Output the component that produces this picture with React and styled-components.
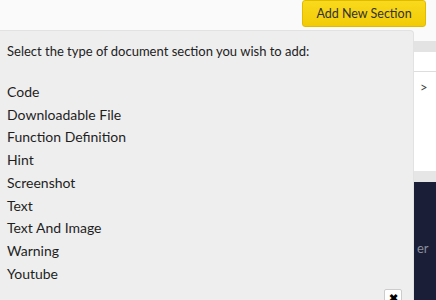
import React from 'react'
import styled, { createGlobalStyle } from 'styled-components'

const Global = createGlobalStyle`
body {
  margin: 0;
  background: #fafafa;
  font-family: Lato, "Open Sans", sans-serif;
  color: #222;
}
`

const Page = styled.div`
position: relative;
width: 436px;
height: 300px;
overflow: hidden;
`

const TopBar = styled.div`
height: 30px;
display: flex;
justify-content: flex-end;
padding-right: 10px;
`

const AddButton = styled.button`
height: 27px;
width: 124px;
background: linear-gradient(#f9d91c, #f2cb06);
border: 1px solid #e2bb00;
border-radius: 3px;
font-family: Lato, sans-serif;
font-size: 12.5px;
color: #333;
padding: 0;
`

const Body = styled.div`
display: flex;
height: 270px;
`

const Panel = styled.div`
width: 414px;
background: #eeeeee;
border-top: 1px solid #e2e2e2;
border-right: 1px solid #e2e2e2;
border-top-right-radius: 4px;
padding: 11px 7px 0;
box-sizing: border-box;
position: relative;
`

const Prompt = styled.div`
font-size: 13px;
line-height: 18px;
margin-bottom: 21px;
`

const Item = styled.div`
font-size: 14px;
line-height: 22.7px;
color: #1e1e1e;
`

const Side = styled.div`
flex: 1;
display: flex;
flex-direction: column;
`

const Band = styled.div`
height: ${p => p.h}px;
background: ${p => p.bg};
border-bottom: ${p => (p.line ? '1px solid #ddd' : 'none')};
font-size: 13px;
color: ${p => p.fg || '#444'};
padding-left: 6px;
display: flex;
align-items: ${p => p.align || 'center'};
`

const Close = styled.button`
position: absolute;
right: 11px;
top: 258px;
width: 18px;
height: 18px;
background: #fff;
border: 1px solid #ccc;
border-radius: 2px;
padding: 0;
font-size: 11px;
line-height: 16px;
color: #000;
font-weight: bold;
`

const items = ['Code', 'Downloadable File', 'Function Definition', 'Hint', 'Screenshot', 'Text', 'Text And Image', 'Warning', 'Youtube']

export default function App() {
  return (
    <Page>
      <Global />
      <TopBar>
        <AddButton>Add New Section</AddButton>
      </TopBar>
      <Body>
        <Panel>
          <Prompt>Select the type of document section you wish to add:</Prompt>
          {items.map(i => <Item key={i}>{i}</Item>)}
          <Close>✖</Close>
        </Panel>
        <Side>
          <Band h={11} bg="#fafafa" />
          <Band h={11} bg="#e3e3e3" />
          <Band h={19} bg="#fff" line />
          <Band h={31} bg="#fff">&gt;</Band>
          <Band h={69} bg="#fff" />
          <Band h={11} bg="#e6e6e6" />
          <Band h={118} bg="#1a1e36" fg="#8a8d9c" align="flex-start"><span style={{ marginTop: 58, marginLeft: -3 }}>er</span></Band>
        </Side>
      </Body>
    </Page>
  )
}
